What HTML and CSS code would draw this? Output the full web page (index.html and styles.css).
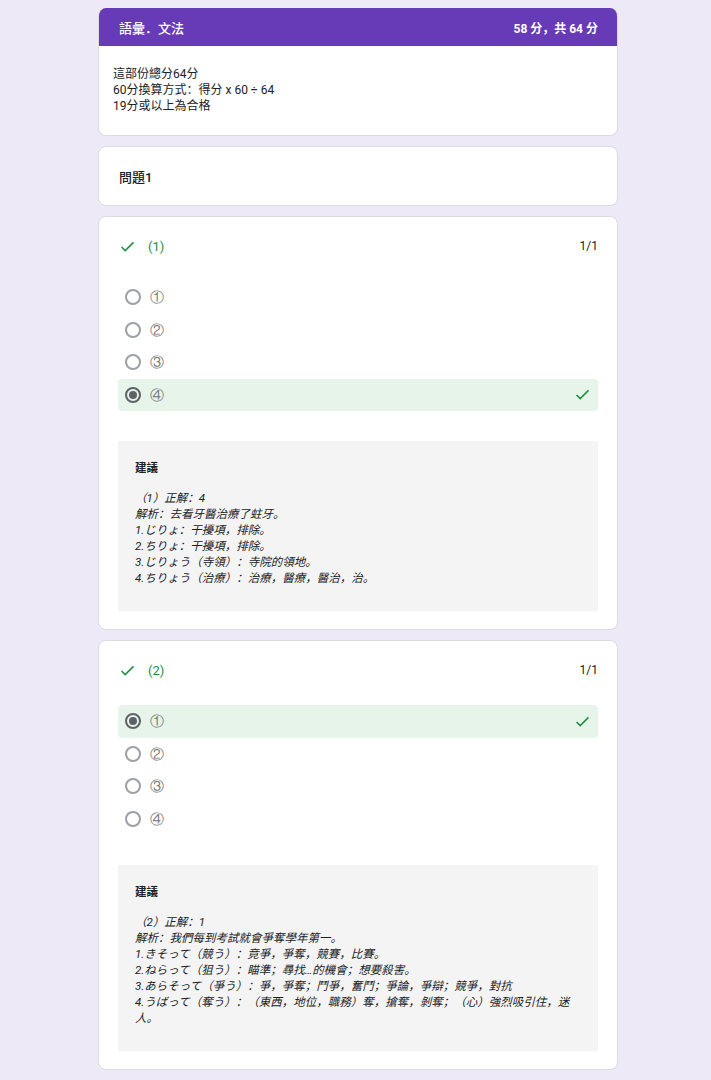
FILE: index.html
```html
<!DOCTYPE html>
<html lang="zh-Hans">
<head>
  <meta charset="UTF-8" />
  <title>語彙．文法</title>
  <link rel="stylesheet" href="styles.css">
</head>
<body>

<div class="page">

  <div class="card section">
    <div class="section-head">
      <span>語彙．文法</span>
      <span class="score">58 分，共 64 分</span>
    </div>
    <div class="section-body">
      這部份總分64分<br>
      60分換算方式：得分 x 60 ÷ 64<br>
      19分或以上為合格
    </div>
  </div>

  <div class="card label-card">問題1</div>

  <div class="card question">
    <div class="q-head">
      <div class="q-title">
        <svg class="tick" viewBox="0 0 16 12"><polyline points="1.5,6.5 5.5,10.5 14.5,1.5"/></svg>
        <span>(1)</span>
      </div>
      <span class="points">1/1</span>
    </div>
    <div class="options">
      <div class="option"><span class="radio"></span><span class="opt-text">①</span></div>
      <div class="option"><span class="radio"></span><span class="opt-text">②</span></div>
      <div class="option"><span class="radio"></span><span class="opt-text">③</span></div>
      <div class="option correct">
        <span class="radio checked"></span><span class="opt-text">④</span>
        <svg class="tick tick-right" viewBox="0 0 16 12"><polyline points="1.5,6.5 5.5,10.5 14.5,1.5"/></svg>
      </div>
    </div>
    <div class="feedback">
      <div class="fb-title">建議</div>
      <div class="fb-text">
        （1）正解：4<br>
        解析：去看牙醫治療了蛀牙。<br>
        1.じりょ：干擾項，排除。<br>
        2.ちりょ：干擾項，排除。<br>
        3.じりょう（寺領）：寺院的領地。<br>
        4.ちりょう（治療）：治療，醫療，醫治，治。
      </div>
    </div>
  </div>

  <div class="card question">
    <div class="q-head">
      <div class="q-title">
        <svg class="tick" viewBox="0 0 16 12"><polyline points="1.5,6.5 5.5,10.5 14.5,1.5"/></svg>
        <span>(2)</span>
      </div>
      <span class="points">1/1</span>
    </div>
    <div class="options">
      <div class="option correct">
        <span class="radio checked"></span><span class="opt-text">①</span>
        <svg class="tick tick-right" viewBox="0 0 16 12"><polyline points="1.5,6.5 5.5,10.5 14.5,1.5"/></svg>
      </div>
      <div class="option"><span class="radio"></span><span class="opt-text">②</span></div>
      <div class="option"><span class="radio"></span><span class="opt-text">③</span></div>
      <div class="option"><span class="radio"></span><span class="opt-text">④</span></div>
    </div>
    <div class="feedback">
      <div class="fb-title">建議</div>
      <div class="fb-text">
        （2）正解：1<br>
        解析：我們每到考試就會爭奪學年第一。<br>
        1.きそって（競う）：竟爭，爭奪，競賽，比賽。<br>
        2.ねらって（狙う）：瞄準；尋找…的機會；想要殺害。<br>
        3.あらそって（爭う）：爭，爭奪；鬥爭，奮鬥；爭論，爭辯；競爭，對抗<br>
        4.うばって（奪う）：（東西，地位，職務）奪，搶奪，剝奪；（心）強烈吸引住，迷人。
      </div>
    </div>
  </div>

</div>

</body>
</html>
```

FILE: styles.css
```css
body {
  margin: 0;
  background: #ede9f7;
  font-family: Roboto, "Noto Sans CJK SC", sans-serif;
  color: #202124;
  text-spacing-trim: space-all;
}
.page {
  width: 520px;
  margin: 8px 0 0 98px;
  display: flex;
  flex-direction: column;
  gap: 10px;
  padding-bottom: 20px;
}
.card {
  background: #fff;
  border: 1px solid #dadce0;
  border-radius: 8px;
  box-sizing: border-box;
}
.section {
  border-top: none;
  overflow: hidden;
}
.section-head {
  background: #673ab7;
  color: #fff;
  height: 38px;
  display: flex;
  align-items: center;
  justify-content: space-between;
  padding: 0 19px 0 20px;
  font-size: 13px;
  font-weight: 500;
}
.section-head .score {
  font-size: 12px;
  font-weight: 700;
}
.section-body {
  padding: 20px 14px 21px;
  font-size: 12px;
  line-height: 16px;
}
.label-card {
  height: 60px;
  display: flex;
  align-items: center;
  padding: 0 20px;
  font-size: 13px;
  font-weight: 500;
}
.question {
  padding: 19px 19px 18px;
}
.q-head {
  display: flex;
  justify-content: space-between;
  align-items: center;
  height: 20px;
}
.q-title {
  display: flex;
  align-items: center;
  gap: 13px;
  color: #1e8e3e;
  font-size: 13px;
  padding-left: 2px;
}
.tick {
  width: 15px;
  height: 11px;
  fill: none;
  stroke: #1e8e3e;
  stroke-width: 1.7;
}
.points {
  font-size: 12px;
  color: #202124;
}
.options {
  margin-top: 25px;
}
.option {
  height: 32.5px;
  display: flex;
  align-items: center;
  padding: 0 7px;
  border-radius: 4px;
}
.option.correct {
  background: #e6f4ea;
}
.radio {
  width: 16px;
  height: 16px;
  border: 2px solid #9aa0a6;
  border-radius: 50%;
  box-sizing: border-box;
  flex-shrink: 0;
  display: flex;
  align-items: center;
  justify-content: center;
}
.radio.checked {
  border-color: #5f6368;
}
.radio.checked::after {
  content: "";
  width: 8px;
  height: 8px;
  border-radius: 50%;
  background: #5f6368;
}
.opt-text {
  margin-left: 9px;
  font-size: 14px;
  line-height: 16px;
  color: #70757a;
  font-family: "DejaVu Sans", sans-serif;
  font-weight: 300;
}
.tick-right {
  margin-left: auto;
  margin-right: 1px;
}
.feedback {
  margin-top: 30px;
  background: #f4f4f4;
  padding: 19px 17px 25px;
}
.fb-title {
  font-size: 11.5px;
  font-weight: 700;
  line-height: 16px;
}
.fb-text {
  margin-top: 14px;
  font-size: 11.5px;
  line-height: 16px;
  font-style: italic;
}
```
